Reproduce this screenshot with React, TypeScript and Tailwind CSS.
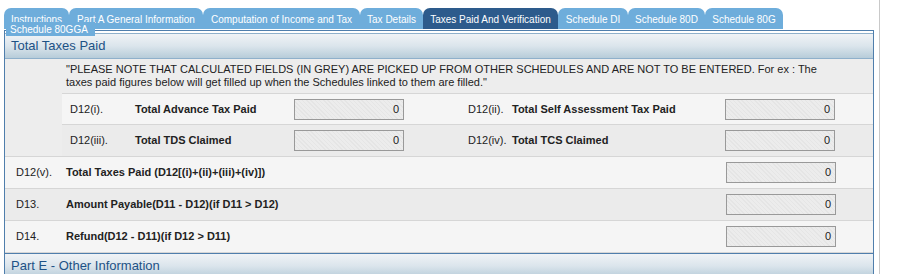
import React from "react";

const tabs = [
  { label: "Instructions", w: "w-[65px]" },
  { label: "Part A General Information", w: "w-[134px]" },
  { label: "Computation of Income and Tax", w: "w-[157px]" },
  { label: "Tax Details", w: "w-[63px]" },
  { label: "Taxes Paid And Verification", w: "w-[135px]", active: true },
  { label: "Schedule DI", w: "w-[70px]" },
  { label: "Schedule 80D", w: "w-[77px]" },
  { label: "Schedule 80G", w: "w-[78px]" },
];

const Field = () => (
  <div className="w-[110px] h-[21px] border border-[#999] bg-[repeating-linear-gradient(45deg,#e5e5e5_0px,#e5e5e5_1px,#ececec_1px,#ececec_3px)] flex items-center justify-end pr-[4px] text-[11px] text-[#222]">
    0
  </div>
);

const SectionHeader = ({ title }: { title: string }) => (
  <div className="h-[24px] flex items-center pl-[6px] bg-gradient-to-b from-[#f0f3f6] via-[#dbe5ec] to-[#b7ccd9] text-[13px] text-[#1d5286]">
    {title}
  </div>
);

export default function App() {
  return (
    <div
      className="relative w-[880px] h-[274px] overflow-hidden bg-white border-r border-[#c9c9c9]"
      style={{ fontFamily: '"Liberation Sans", Arial, sans-serif' }}
    >
      {/* tab strip */}
      <div className="flex pt-[8px] pl-[4px]">
        {tabs.map((t) => (
          <div
            key={t.label}
            className={`${t.w} h-[21px] pt-[2px] rounded-t-[7px] flex items-center justify-center text-[10px] text-white whitespace-nowrap ${
              t.active ? "bg-[#2d5b8c]" : "bg-[#6eaddb]"
            }`}
          >
            {t.label}
          </div>
        ))}
      </div>

      {/* wrapped second row of tabs */}
      <div className="absolute left-[6px] top-[22px] w-[89px] h-[14px] bg-[#6eaddb] text-white text-[10px] flex items-center pl-[4px] z-10">
        Schedule 80GGA
      </div>

      {/* panel */}
      <div className="ml-[4px] w-[870px] mt-[1px] border-x border-t border-[#4f7eac]">
        <div className="mt-[2px] border-t border-b border-[#8fb0cb]">
          <SectionHeader title="Total Taxes Paid" />
        </div>

        <div className="flex bg-[#ededed] border-b border-[#d6d6d6]">
          <div className="w-[57px] shrink-0" />
          <div className="flex-1">
            <div className="h-[35px] flex items-center pl-[4px] pr-[36px] text-[11px] leading-[13px] text-[#222] border-b border-[#d6d6d6]">
              "PLEASE NOTE THAT CALCULATED FIELDS (IN GREY) ARE PICKED UP FROM OTHER SCHEDULES AND ARE NOT TO BE ENTERED. For ex : The taxes paid figures below will get filled up when the Schedules linked to them are filled."
            </div>
            <div className="h-[31px] flex items-center bg-[#f5f5f5] border-b border-[#d6d6d6] text-[11px] text-[#222]">
              <span className="w-[65px] pl-[8px]">D12(i).</span>
              <span className="w-[167px] pl-[8px] font-bold">Total Advance Tax Paid</span>
              <Field />
              <span className="w-[44px] ml-[64px]">D12(ii).</span>
              <span className="w-[213px] font-bold">Total Self Assessment Tax Paid</span>
              <Field />
            </div>
            <div className="h-[31px] flex items-center bg-[#ebebeb] text-[11px] text-[#222]">
              <span className="w-[65px] pl-[8px]">D12(iii).</span>
              <span className="w-[167px] pl-[8px] font-bold">Total TDS Claimed</span>
              <Field />
              <span className="w-[44px] ml-[64px]">D12(iv).</span>
              <span className="w-[213px] font-bold">Total TCS Claimed</span>
              <Field />
            </div>
          </div>
        </div>

        {[
          { code: "D12(v).", label: "Total Taxes Paid (D12[(i)+(ii)+(iii)+(iv)])", bg: "bg-[#f5f5f5]" },
          { code: "D13.", label: "Amount Payable(D11 - D12)(if D11 > D12)", bg: "bg-[#ebebeb]" },
          { code: "D14.", label: "Refund(D12 - D11)(if D12 > D11)", bg: "bg-[#f5f5f5]" },
        ].map((r) => (
          <div
            key={r.code}
            className={`h-[32px] flex items-center border-b border-[#d6d6d6] text-[11px] text-[#222] ${r.bg}`}
          >
            <span className="w-[61px] pl-[11px]">{r.code}</span>
            <span className="flex-1 font-bold">{r.label}</span>
            <div className="mr-[37px]">
              <Field />
            </div>
          </div>
        ))}

        <div className="border-t border-[#4f7eac]">
          <SectionHeader title="Part E - Other Information" />
        </div>
      </div>
    </div>
  );
}
